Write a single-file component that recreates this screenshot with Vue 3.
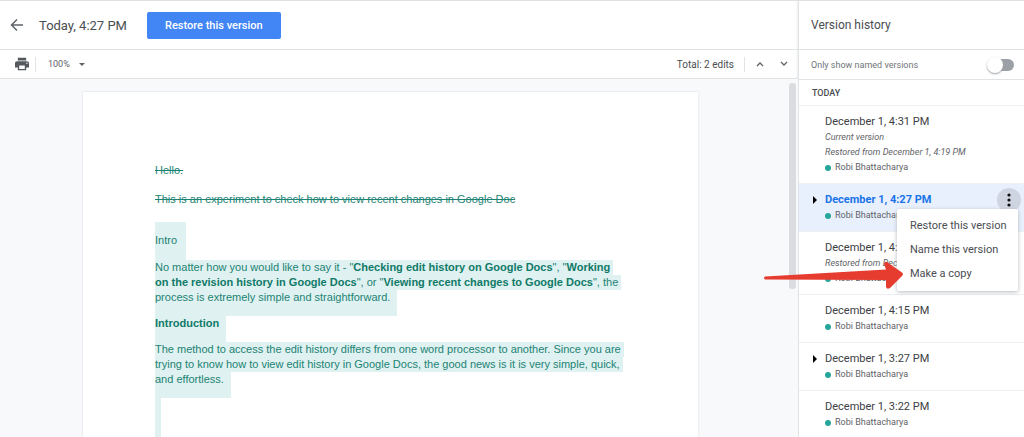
<script setup>
import { ref } from 'vue'

const author = 'Robi Bhattacharya'
const zoom = ref('100%')
const namedOnly = ref(false)
const versions = [
  { time: 'December 1, 4:31 PM', notes: ['Current version', 'Restored from December 1, 4:19 PM'] },
  { time: 'December 1, 4:27 PM', notes: [], expandable: true, active: true },
  { time: 'December 1, 4:19 PM', notes: ['Restored from December 1, 4:15 PM'] },
  { time: 'December 1, 4:15 PM', notes: [] },
  { time: 'December 1, 3:27 PM', notes: [], expandable: true },
  { time: 'December 1, 3:22 PM', notes: [] },
]
const actions = ['Restore this version', 'Name this version', 'Make a copy']
</script>

<template>
  <div class="app">
    <main class="main">
      <header class="topbar">
        <button class="icon-btn back" aria-label="Back">
          <svg width="14" height="14" viewBox="0 0 14 14"><path d="M13 7H2M7 1.5L1.5 7L7 12.5" fill="none" stroke="#5f6368" stroke-width="1.5" /></svg>
        </button>
        <h1 class="title">Today, 4:27 PM</h1>
        <button class="restore">Restore this version</button>
      </header>

      <div class="toolbar">
        <button class="icon-btn print" aria-label="Print">
          <svg width="14" height="14" viewBox="2 2 20 20"><path fill="#55595e" d="M19 8H5c-1.66 0-3 1.34-3 3v6h4v4h12v-4h4v-6c0-1.66-1.34-3-3-3zm-3 11H8v-5h8v5zm3-7c-.55 0-1-.45-1-1s.45-1 1-1 1 .45 1 1-.45 1-1 1zm-1-9H6v4h12V3z" /></svg>
        </button>
        <span class="rule"></span>
        <label class="zoom">
          <select v-model="zoom" aria-label="Zoom">
            <option>100%</option>
            <option>75%</option>
          </select>
          <svg width="6" height="3" viewBox="0 0 6 3"><path d="M0 0h6L3 3z" fill="#5f6368" /></svg>
        </label>
        <span class="total">Total: 2 edits</span>
        <span class="rule"></span>
        <button class="icon-btn step" aria-label="Previous edit">
          <svg width="8" height="6" viewBox="0 0 8 6"><path d="M1 5L4 2L7 5" fill="none" stroke="#5f6368" stroke-width="1.3" /></svg>
        </button>
        <button class="icon-btn step" aria-label="Next edit">
          <svg width="8" height="6" viewBox="0 0 8 6"><path d="M1 1L4 4L7 1" fill="none" stroke="#5f6368" stroke-width="1.3" /></svg>
        </button>
      </div>

      <div class="canvas">
        <article class="paper">
          <p class="removed"><del>Hello.</del></p>
          <p class="removed"><del>This is an experiment to check how to view recent changes in Google Doc</del></p>
          <p class="added intro"><span>Intro</span></p>
          <p class="added">
            <span>No matter how you would like to say it - "<b>Checking edit history on Google Docs</b>", "<b>Working</b></span>
            <span><b>on the revision history in Google Docs</b>", or "<b>Viewing recent changes to Google Docs</b>", the</span>
            <span class="end">process is extremely simple and straightforward.</span>
          </p>
          <h2 class="added subtitle"><span class="end">Introduction</span></h2>
          <p class="added">
            <span>The method to access the edit history differs from one word processor to another. Since you are</span>
            <span>trying to know how to view edit history in Google Docs, the good news is it is very simple, quick,</span>
            <span class="end">and effortless.</span>
          </p>
          <div class="blank"></div>
        </article>
        <div class="scroll"></div>
      </div>
    </main>

    <aside class="panel">
      <h2 class="panel-title">Version history</h2>
      <label class="named">
        <span>Only show named versions</span>
        <input v-model="namedOnly" type="checkbox" class="switch" />
      </label>
      <h3 class="day">TODAY</h3>
      <ul class="list">
        <li v-for="v in versions" :key="v.time" class="item" :class="{ active: v.active }">
          <button v-if="v.expandable" class="icon-btn expand" aria-label="Expand">
            <svg width="4" height="8" viewBox="0 0 4 8"><path d="M0 0L4 4L0 8z" fill="#000" /></svg>
          </button>
          <div class="info">
            <div class="time">{{ v.time }}</div>
            <div v-for="n in v.notes" :key="n" class="note">{{ n }}</div>
            <div class="author"><i class="dot"></i>{{ author }}</div>
          </div>
          <template v-if="v.active">
            <button class="icon-btn more" aria-label="More actions">
              <svg width="4" height="14" viewBox="0 0 4 14"><g fill="#111"><circle cx="2" cy="2" r="1.6" /><circle cx="2" cy="7" r="1.6" /><circle cx="2" cy="12" r="1.6" /></g></svg>
            </button>
            <div class="menu">
              <button v-for="a in actions" :key="a">{{ a }}</button>
              <svg class="arrow" width="144" height="34" viewBox="0 0 144 34"><path d="M4 18.500Q2 20 4 21.500L125 22L125 29Q126 32 129 30L141 18Q143 16 141 14.500L126 4Q123.500 3 123 6L125 11.500Z" fill="#e63c2f" /></svg>
            </div>
          </template>
        </li>
      </ul>
    </aside>
  </div>
</template>

<style>
body {
  margin: 0;
}
</style>

<style scoped>
.app {
  display: flex;
  height: 100vh;
  overflow: hidden;
  box-sizing: border-box;
  border-top: 1px solid #dfe0e2;
  background: #fff;
  color: #4a4d51;
  font-family: Roboto, "Liberation Sans", sans-serif;
  font-size: 11px;
}
.app * {
  box-sizing: border-box;
}
h1, h2, h3, p, ul {
  margin: 0;
  padding: 0;
  font-weight: 400;
}
button {
  border: 0;
  padding: 0;
  background: none;
  font-family: inherit;
  color: inherit;
  cursor: pointer;
}
.icon-btn {
  display: flex;
  align-items: center;
  justify-content: center;
  flex: none;
}
.main {
  flex: 1;
  min-width: 0;
  display: flex;
  flex-direction: column;
}
.topbar {
  display: flex;
  align-items: center;
  flex: none;
  height: 49px;
  padding-left: 10px;
  border-bottom: 1px solid #e2e3e5;
}
.back {
  width: 14px;
  height: 24px;
}
.title {
  margin-left: 15px;
  width: 108px;
  font-size: 13px;
  white-space: nowrap;
}
.restore {
  height: 27px;
  padding: 0 18px;
  border-radius: 2px;
  background: #4285f4;
  color: #fff;
  font-size: 11px;
  font-weight: 500;
  white-space: nowrap;
}
.toolbar {
  display: flex;
  align-items: center;
  flex: none;
  height: 29px;
  padding: 0 5px 0 15px;
  border-bottom: 1px solid #e2e3e5;
}
.rule {
  width: 1px;
  height: 15px;
  background: #e2e3e5;
}
.print {
  width: 14px;
  height: 20px;
  margin-right: 6px;
}
.zoom {
  display: flex;
  align-items: center;
  gap: 7px;
  margin-left: 12px;
}
.zoom select {
  appearance: none;
  border: 0;
  padding: 0;
  background: none;
  width: 24px;
  color: #5f6368;
  font-family: inherit;
  font-size: 9px;
}
.total {
  margin: 0 10px 0 auto;
  font-size: 10px;
}
.step {
  width: 24px;
  height: 20px;
}
.step svg {
  margin-left: 6px;
}
.canvas {
  position: relative;
  flex: 1;
  min-height: 0;
  overflow: hidden;
  padding: 13px 17px 0 0;
  background: #f8f9fb;
}
.paper {
  width: calc(100% - 166px);
  max-width: 615px;
  min-height: 100%;
  margin: 0 auto;
  padding: 71px 72px 0;
  background: #fff;
  box-shadow: 0 0 2px #d5d7da;
  color: #1c8374;
  font-family: "Liberation Sans", Arial, sans-serif;
  font-size: 11px;
  line-height: 15px;
  white-space: nowrap;
}
.removed {
  margin-bottom: 14px;
}
.added span {
  display: block;
  width: fit-content;
  padding-right: 3px;
  background: #dff1f0;
}
.added .end {
  height: 26px;
  padding-right: 7px;
}
.added b {
  color: #107a69;
}
.intro span {
  height: 38px;
  margin-top: 15px;
  padding: 11px 9px 0 0;
}
.subtitle {
  color: #107a69;
  font-size: 11px;
  font-weight: 700;
}
.blank {
  width: 6px;
  height: 60px;
  background: #dff1f0;
}
.scroll {
  position: absolute;
  top: 4px;
  right: 2px;
  width: 7px;
  height: 206px;
  border-radius: 3px;
  background: #dadce0;
}
.panel {
  flex: none;
  width: 226px;
  border-left: 1px solid #e2e3e5;
  box-shadow: 0 0 3px #dadce0;
  background: #fff;
}
.panel-title {
  height: 49px;
  padding-left: 12px;
  border-bottom: 1px solid #e2e3e5;
  font-size: 12px;
  line-height: 48px;
}
.named {
  display: flex;
  align-items: center;
  justify-content: space-between;
  height: 30px;
  padding: 0 10px 0 12px;
  border-bottom: 1px solid #e2e3e5;
  color: #70757a;
  font-size: 9px;
}
.switch {
  appearance: none;
  position: relative;
  width: 24px;
  height: 12px;
  margin: 0;
  border-radius: 6px;
  background: #9aa0a6;
}
.switch::before {
  content: "";
  position: absolute;
  top: -2px;
  left: -3px;
  width: 16px;
  height: 16px;
  border-radius: 50%;
  background: #fff;
  box-shadow: 0 1px 2px #9aa0a6;
}
.switch:checked::before {
  left: 10px;
}
.day {
  height: 26px;
  padding-left: 13px;
  border-bottom: 1px solid #f1f1f2;
  font-size: 9px;
  font-weight: 500;
  line-height: 26px;
}
.list {
  list-style: none;
}
.item {
  position: relative;
  padding: 8px 0 8px 26px;
  border-bottom: 1px solid #eeeff0;
}
.item.active {
  background: #e8f0fe;
}
.expand {
  position: absolute;
  left: 14px;
  top: 8px;
  width: 4px;
  height: 16px;
}
.time {
  height: 16px;
  line-height: 16px;
  color: #3c4043;
}
.active .time {
  color: #1a73e8;
  font-weight: 700;
}
.note,
.author {
  height: 15px;
  line-height: 15px;
  font-size: 9px;
  color: #5f6368;
  white-space: nowrap;
}
.note {
  font-style: italic;
}
.author {
  display: flex;
  align-items: center;
}
.dot {
  width: 6px;
  height: 6px;
  margin-right: 4px;
  border-radius: 50%;
  background: #26a69a;
}
.more {
  position: absolute;
  top: 4px;
  right: 3px;
  width: 24px;
  height: 24px;
  border-radius: 50%;
  background: #cfd5e0;
}
.menu {
  position: absolute;
  z-index: 1;
  top: 25px;
  right: 6px;
  width: 121px;
  padding: 4px 0 6px;
  border-radius: 2px;
  background: #fff;
  box-shadow: 0 1px 4px #b5b8bd;
}
.menu button {
  display: block;
  width: 100%;
  height: 24px;
  padding-left: 13px;
  text-align: left;
  font-size: 11px;
  white-space: nowrap;
}
.arrow {
  position: absolute;
  top: 49px;
  left: -136px;
  pointer-events: none;
}
</style>
